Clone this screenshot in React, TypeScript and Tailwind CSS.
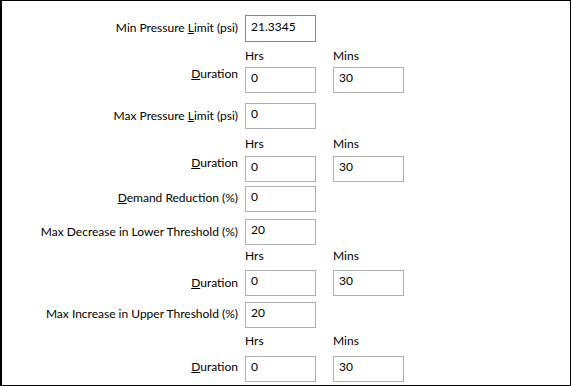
import React from "react";

type FieldProps = {
  value: string;
  focused?: boolean;
};

// Windows-style textbox
function Field({ value, focused }: FieldProps) {
  if (focused) {
    return (
      <div className="w-[71px] h-[27px] border border-solid border-[rgb(74,148,224)] bg-white pl-[5px] pt-[4px] leading-[14px]">
        {value}
      </div>
    );
  }
  return (
    <div className="w-[71px] h-[26px] border border-solid border-[rgb(173,173,173)] bg-white pl-[5px] pt-[3px] leading-[14px]">
      {value}
    </div>
  );
}

type RowProps = {
  label: React.ReactNode;
  value: string;
  labelPad: string;
  rowClass: string;
  focused?: boolean;
  mins?: string;
};

function Row({ label, value, labelPad, rowClass, focused, mins }: RowProps) {
  return (
    <div className={"flex items-start " + rowClass}>
      <div className={"w-[236px] text-right leading-[14px] " + labelPad}>{label}</div>
      <div className="ml-[7px]">
        <Field value={value} focused={focused} />
      </div>
      {mins !== undefined && (
        <div className="ml-[17px]">
          <Field value={mins} />
        </div>
      )}
    </div>
  );
}

function Header({ rowClass }: { rowClass: string }) {
  return (
    <div className={"flex h-[14px] leading-[14px] " + rowClass}>
      <div className="w-[236px]" />
      <div className="ml-[7px] w-[71px]">Hrs</div>
      <div className="ml-[17px] w-[71px]">Mins</div>
    </div>
  );
}

const Duration = (
  <span>
    <u>D</u>uration
  </span>
);

export default function App() {
  return (
    <div
      className="w-[571px] h-[386px] bg-white border border-black border-l-2 text-[12px] text-black overflow-hidden"
      style={{ fontFamily: 'Lato, "Open Sans", sans-serif' }}
    >
      <Row
        rowClass="mt-[14px]"
        labelPad="pt-[6px]"
        focused
        value="21.3345"
        label={
          <span>
            Min Pressure <u>L</u>imit (psi)
          </span>
        }
      />
      <Header rowClass="mt-[7px]" />
      <Row rowClass="mt-[4px]" labelPad="pt-0" value="0" mins="30" label={Duration} />
      <Row
        rowClass="mt-[10px]"
        labelPad="pt-[6px]"
        value="0"
        label={
          <span>
            Max Pressure <u>L</u>imit (psi)
          </span>
        }
      />
      <Header rowClass="mt-[8px]" />
      <Row rowClass="mt-[5px]" labelPad="pt-0" value="0" mins="30" label={Duration} />
      <Row
        rowClass="mt-[4px]"
        labelPad="pt-[5px]"
        value="0"
        label={
          <span>
            <u>D</u>emand Reduction (%)
          </span>
        }
      />
      <Row
        rowClass="mt-[7px]"
        labelPad="pt-[6px]"
        value="20"
        label="Max Decrease in Lower Threshold (%)"
      />
      <Header rowClass="mt-[4px]" />
      <Row rowClass="mt-[7px]" labelPad="pt-[6px]" value="0" mins="30" label={Duration} />
      <Row
        rowClass="mt-[6px]"
        labelPad="pt-[5px]"
        value="20"
        label="Max Increase in Upper Threshold (%)"
      />
      <Header rowClass="mt-[6px]" />
      <Row rowClass="mt-[8px]" labelPad="pt-[4px]" value="0" mins="30" label={Duration} />
    </div>
  );
}
